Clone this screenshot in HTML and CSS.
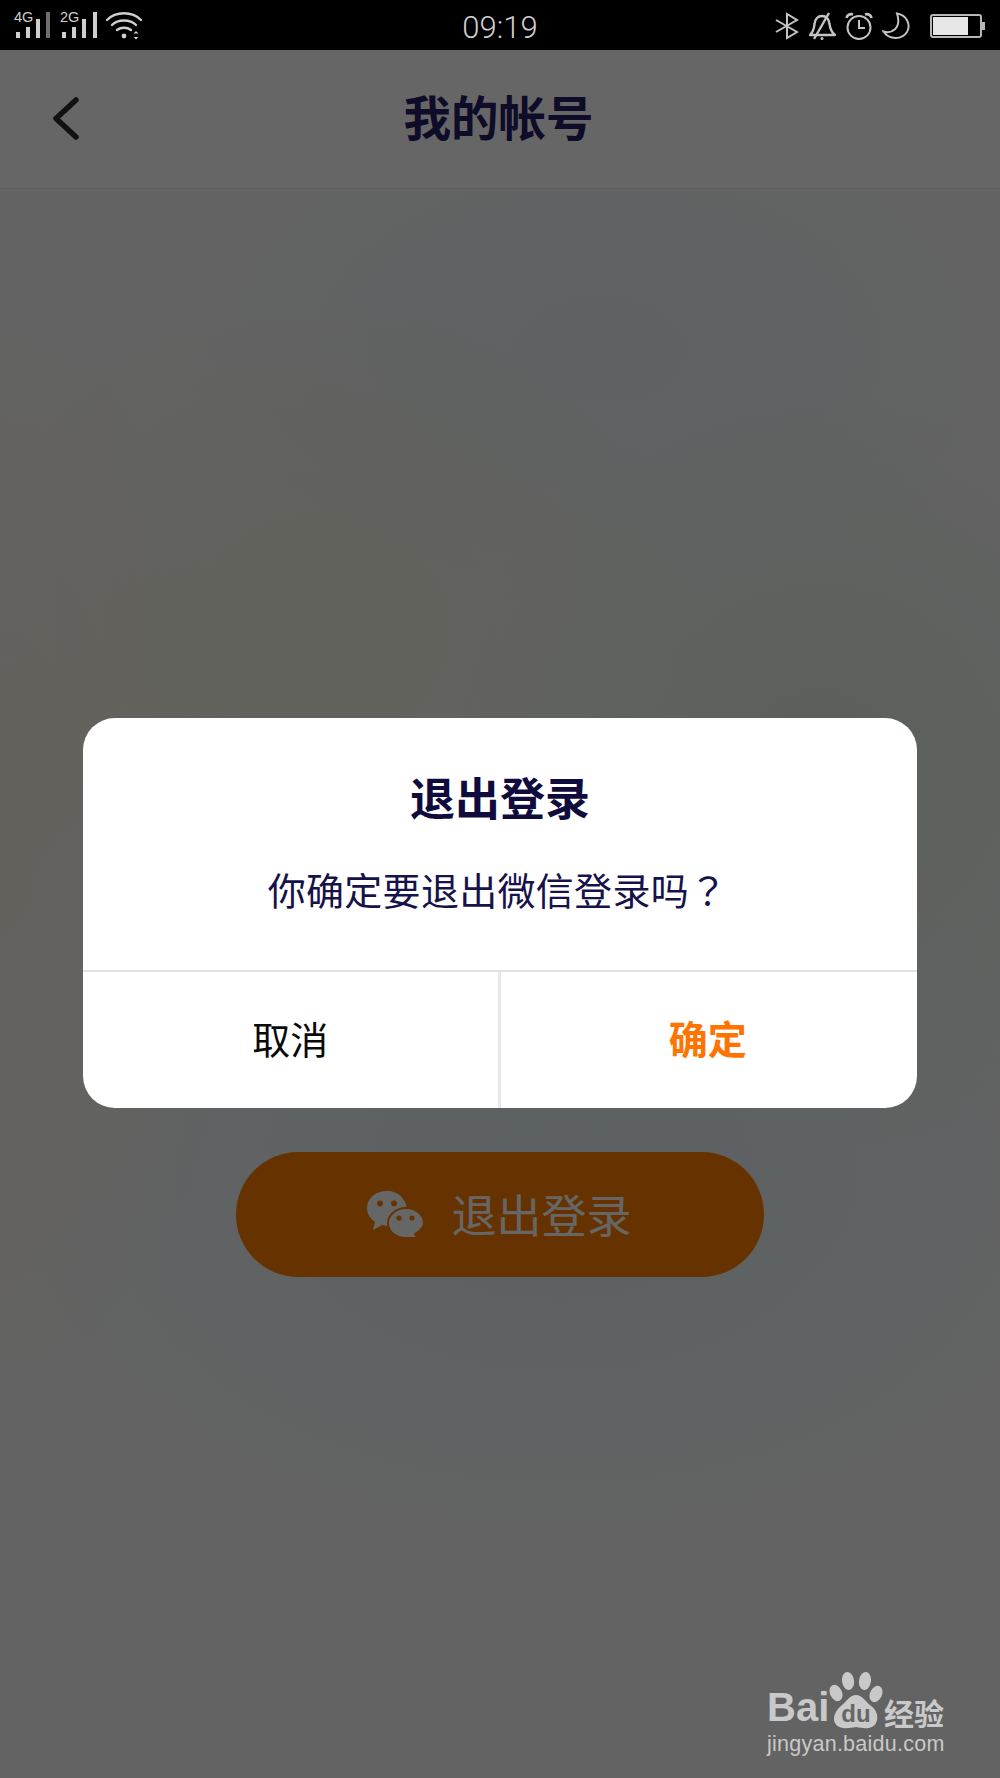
FILE: index.html
```html
<!DOCTYPE html>
<html lang="zh-CN">
<head>
    <meta charset="UTF-8">
    <meta name="viewport" content="width=device-width, initial-scale=1.0">
    <title>我的帐号</title>

    <link rel="stylesheet" href="styles.css">
</head>
<body>
    <div class="status-bar">
        <div class="status-left">
            <div class="signal">
                <span class="signal-label">4G</span>
                <svg width="36" height="28" viewBox="0 0 36 28">
                    <rect x="0" y="20" width="4" height="6" fill="#cfcfcf"/>
                    <rect x="10" y="15" width="4" height="11" fill="#cfcfcf"/>
                    <rect x="20" y="7" width="4" height="19" fill="#cfcfcf"/>
                    <rect x="30" y="0" width="4" height="26" fill="#6e6e6e"/>
                </svg>
            </div>
            <div class="signal">
                <span class="signal-label">2G</span>
                <svg width="36" height="28" viewBox="0 0 36 28">
                    <rect x="0" y="20" width="4" height="6" fill="#cfcfcf"/>
                    <rect x="10" y="15" width="4" height="11" fill="#cfcfcf"/>
                    <rect x="20" y="7" width="4" height="19" fill="#cfcfcf"/>
                    <rect x="31" y="0" width="4" height="26" fill="#cfcfcf"/>
                </svg>
            </div>
            <svg class="wifi" width="36" height="28" viewBox="0 0 36 28" fill="none" stroke="#cfcfcf" stroke-width="2.4" stroke-linecap="round">
                <path d="M1 8 C10 -1 26 -1 35 8"/>
                <path d="M6 13 C12 7 24 7 30 13"/>
                <path d="M11 18 C15 15 21 15 25 18"/>
                <circle cx="18" cy="24" r="2.4" fill="#cfcfcf" stroke="none"/>
                <path d="M27.5 21.5 L30 19 L32.500 21.500 Z" fill="#cfcfcf" stroke="none"/>
                <path d="M27.5 25 L30 27.500 L32.500 25 Z" fill="#cfcfcf" stroke="none"/>
            </svg>
        </div>
        <div class="status-time">09:19</div>
        <div class="status-right">
            <svg width="24" height="28" viewBox="0 0 24 28" fill="none" stroke="#c4c4c4" stroke-width="2">
                <path d="M1 8 L22 20 L12 26 L12 2 L22 8 L1 20"/>
            </svg>
            <svg width="28" height="28" viewBox="0 0 28 28" fill="none" stroke="#c4c4c4" stroke-width="2.4" stroke-linejoin="round">
                <path d="M2 23 C6 19 6 16 6.500 12 C7 7 10 4 14 4 C18 4 21 7 21.500 12 C22 16 23 20 27 23 Z"/>
                <path d="M21 1 L6 27"/>
                <circle cx="14" cy="26.500" r="1.500" fill="#c4c4c4" stroke="none"/>
            </svg>
            <svg width="28" height="28" viewBox="0 0 28 28" fill="none" stroke="#c4c4c4" stroke-width="2">
                <circle cx="14" cy="15.500" r="11.500"/>
                <path d="M14 8 V16 H20"/>
                <path d="M1.500 6 C2 3 5 1.500 8 2.500 M26.500 6 C26 3 23 1.500 20 2.500" stroke-width="2.600"/>
            </svg>
            <svg width="28" height="28" viewBox="0 0 28 28" fill="none" stroke="#c4c4c4" stroke-width="2">
                <path d="M15 1.500 C25 3 29 13 25 20 C20 28 7 28 1.500 19.500 C9 22 20 17 15 1.500 Z"/>
            </svg>
            <div class="battery">
                <div class="battery-body"><div class="battery-level"></div></div>
                <div class="battery-nub"></div>
            </div>
        </div>
    </div>

    <div class="screen">
        <div class="header">
            <svg class="back" width="30" height="44" viewBox="0 0 30 44" fill="none" stroke="#2c2c2c" stroke-width="5.500" stroke-linecap="round" stroke-linejoin="round">
                <path d="M25 3 L5 21.500 L25 40"/>
            </svg>
            <h1 class="header-title">我的帐号</h1>
        </div>

        <div class="content">
            <button class="logout-btn" type="button">
                <svg width="57" height="48" viewBox="0 0 57 48">
                    <path d="M20 0 C9 0 0 7 0 17 C0 23 3 27 8 31 L6 39 L15 34 C18 35 21 35 25 35 C33 35 40 30 40 20 C40 8 31 0 20 0 Z" fill="#fff"/>
                    <circle cx="13" cy="12.500" r="3" fill="#ff8000"/>
                    <circle cx="27" cy="12.500" r="3" fill="#ff8000"/>
                    <path d="M39 17 C29 17 21 24 21 32 C21 41 29 47 39 47 L50 47 L48 43 C53 40 57 37 57 32 C57 24 49 17 39 17 Z" fill="#fff" stroke="#ff8000" stroke-width="2"/>
                    <circle cx="32" cy="27" r="2.600" fill="#ff8000"/>
                    <circle cx="45" cy="27" r="2.600" fill="#ff8000"/>
                </svg>
                <span class="logout-label">退出登录</span>
            </button>
        </div>

        <div class="scrim">
            <div class="dialog">
                <div class="dialog-body">
                    <h2 class="dialog-title">退出登录</h2>
                    <p class="dialog-text">你确定要退出微信登录吗<span class="dialog-mark" lang="zh-TW">？</span></p>
                </div>
                <div class="dialog-actions">
                    <div class="action action-cancel">取消</div>
                    <div class="action action-ok">确定</div>
                </div>
            </div>
        </div>
    </div>

    <div class="watermark">
        <div class="wm-logo">
            <span class="wm-bai">Bai</span>
            <svg class="wm-paw" width="54" height="58" viewBox="0 0 54 58">
                <ellipse cx="7" cy="21" rx="6" ry="8.500" transform="rotate(-25 7 21)" fill="#c9c9c9"/>
                <ellipse cx="19" cy="9" rx="6" ry="9" transform="rotate(-8 19 9)" fill="#c9c9c9"/>
                <ellipse cx="36" cy="9" rx="6" ry="9" transform="rotate(8 36 9)" fill="#c9c9c9"/>
                <ellipse cx="47" cy="22" rx="6" ry="8.500" transform="rotate(25 47 22)" fill="#c9c9c9"/>
                <path d="M27 23 C33 23 36 29 41 33 C48 38 50 45 47 51 C44 57 36 57 27 55 C18 57 9 57 6 51 C3 45 7 38 13 33 C18 29 21 23 27 23 Z" fill="#c9c9c9"/>
                <text class="wm-du" x="27" y="50" text-anchor="middle">du</text>
            </svg>
            <span class="wm-cn">经验</span>
        </div>
        <div class="wm-url">jingyan.baidu.com</div>
    </div>
</body>
</html>
```

FILE: styles.css
```css
html, body {
    margin: 0;
    padding: 0;
}

body {
    width: 1000px;
    height: 1778px;
    position: relative;
    overflow: hidden;
    font-family: "Noto Sans CJK SC", "Noto Sans", sans-serif;
    background-color: #000;
}

.status-bar {
    height: 50px;
    background-color: #000;
    display: grid;
    grid-template-columns: 1fr auto 1fr;
    align-items: center;
}

.status-left {
    display: flex;
    align-items: flex-end;
    gap: 10px;
    padding-left: 16px;
    height: 28px;
}

.signal {
    position: relative;
    width: 36px;
    height: 28px;
}

.signal-label {
    position: absolute;
    left: -2px;
    top: -3px;
    font-family: "Liberation Sans", sans-serif;
    font-size: 14.500px;
    line-height: 16px;
    color: #cfcfcf;
    background-color: #000;
    padding-right: 1px;
}

.wifi {
    margin-left: -2px;
}

.status-time {
    font-family: Roboto, sans-serif;
    font-weight: 300;
    font-size: 31px;
    color: #cfcfcf;
    line-height: 54px;
    padding-top: 1px;
    height: 50px;
}

.status-right {
    display: flex;
    align-items: center;
    justify-content: flex-end;
    gap: 9px;
    padding-right: 15px;
}

.battery {
    display: flex;
    align-items: center;
    margin-left: 11px;
}

.battery-body {
    width: 52px;
    height: 24px;
    box-sizing: border-box;
    border: 2px solid #b8b8b8;
    border-radius: 3px;
    padding: 1px;
}

.battery-level {
    width: 35px;
    height: 100%;
    background-color: #e6e6e6;
}

.battery-nub {
    width: 3px;
    height: 8px;
    background-color: #b8b8b8;
}

.screen {
    position: relative;
    height: 1728px;
    background-color: #f8f8f8;
    background-image:
        radial-gradient(ellipse 240px 560px at 0px 800px, rgba(255, 232, 200, 0.35), rgba(255, 232, 200, 0)),
        radial-gradient(ellipse 380px 340px at 320px 580px, rgba(238, 240, 205, 0.5), rgba(238, 240, 205, 0)),
        radial-gradient(ellipse 420px 260px at 600px 300px, rgba(225, 240, 248, 0.5), rgba(225, 240, 248, 0)),
        radial-gradient(ellipse 380px 380px at 820px 720px, rgba(212, 235, 215, 0.65), rgba(212, 235, 215, 0)),
        radial-gradient(ellipse 560px 380px at 560px 1120px, rgba(222, 238, 245, 0.75), rgba(222, 238, 245, 0));
}

.header {
    height: 138px;
    background-color: #fff;
    border-bottom: 1px solid #ececec;
    display: flex;
    align-items: center;
    justify-content: center;
    position: relative;
}

.back {
    position: absolute;
    left: 51px;
    top: 47px;
}

.header-title {
    margin: 0 0 6px -3px;
    font-size: 47.500px;
    font-weight: 700;
    line-height: 64px;
    color: #231e64;
}

.content {
    display: flex;
    justify-content: center;
    padding-top: 963px;
}

.logout-btn {
    width: 528px;
    height: 125px;
    border: none;
    border-radius: 63px;
    background-color: #ff8000;
    color: #fff;
    font-family: inherit;
    font-size: 45px;
    display: flex;
    align-items: center;
    justify-content: center;
    gap: 27px;
    padding: 0 1px 0 0;
}

.logout-label {
    line-height: 60px;
    margin-top: -2px;
}

.scrim {
    position: absolute;
    inset: 0;
    background-color: rgba(0, 0, 0, 0.6);
    box-sizing: border-box;
    padding: 668px 83px 0;
}

.dialog {
    background-color: #fff;
    border-radius: 32px;
    overflow: hidden;
    height: 390px;
    display: flex;
    flex-direction: column;
}

.dialog-body {
    height: 252px;
    text-align: center;
    padding-top: 47px;
    box-sizing: border-box;
}

.dialog-title {
    margin: 0;
    font-size: 45px;
    font-weight: 700;
    line-height: 64px;
    color: #0f0b3d;
}

.dialog-text {
    margin: 33px 0 0 -5px;
    font-size: 38px;
    line-height: 54px;
    letter-spacing: 0.3px;
    color: #16124a;
}

.dialog-mark {
    font-family: "Noto Sans CJK TC", sans-serif;
}

.dialog-actions {
    flex: 1;
    display: flex;
    border-top: 2px solid #e2e2e2;
    padding-bottom: 6px;
}

.action {
    flex: 1;
    display: flex;
    align-items: center;
    justify-content: center;
    font-size: 38px;
}

.action-cancel {
    color: #0a0a0a;
    padding-right: 3px;
}

.action-ok {
    color: #ff7300;
    font-size: 39px;
    font-weight: 700;
    position: relative;
    padding-right: 2px;
}

.action-ok::before {
    content: "";
    position: absolute;
    left: -3px;
    top: 0;
    bottom: -6px;
    width: 3px;
    background-color: #e8e8e8;
}

.watermark {
    position: absolute;
    left: 767px;
    top: 1672px;
    width: 180px;
    color: #c9c9c9;
}

.wm-logo {
    display: flex;
    align-items: flex-end;
    height: 58px;
}

.wm-bai {
    font-family: "Liberation Sans", sans-serif;
    font-weight: 700;
    font-size: 40px;
    line-height: 46px;
    width: 62px;
}

.wm-paw {
    flex: none;
}

.wm-du {
    font-family: "Liberation Sans", sans-serif;
    font-weight: 700;
    font-size: 24px;
    fill: #666;
}

.wm-cn {
    font-size: 30px;
    font-weight: 700;
    line-height: 36px;
    margin-left: 1px;
    white-space: nowrap;
}

.wm-url {
    font-family: "Liberation Sans", sans-serif;
    font-size: 21.500px;
    line-height: 26px;
    letter-spacing: 0.25px;
    white-space: nowrap;
    margin-top: 1px;
}
```
